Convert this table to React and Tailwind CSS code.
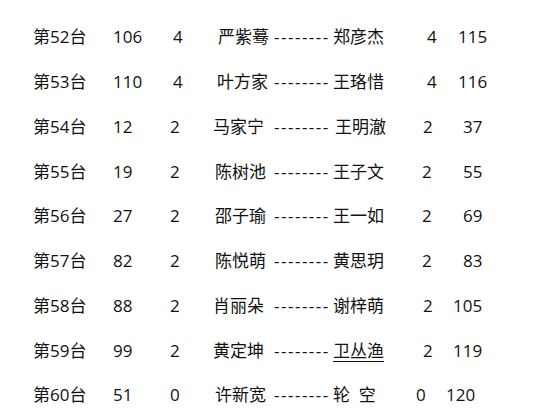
/**
 * chess pairing list, tables 52-60
 * plain word-doc style rows, fixed tab columns
 */

const rows = [
  { t: '第52台', a: '106', b: '4', p1: '严紫蓦', p2: '郑彦杰', c: '4', d: '115', bPad: 'pl-[3px]', p1Pad: 'pl-[5px]', cPad: 'pl-[11px]', dPad: 'pl-[12px]' },
  { t: '第53台', a: '110', b: '4', p1: '叶方家', p2: '王珞惜', c: '4', d: '116', bPad: 'pl-[3px]', p1Pad: 'pl-[4px]', cPad: 'pl-[11px]', dPad: 'pl-[12px]' },
  { t: '第54台', a: '12', b: '2', p1: '马家宁', p2: '王明澈', c: '2', d: '37', bPad: 'pl-0', p1Pad: 'pl-0', cPad: 'pl-[7px]', dPad: 'pl-[17px]', p2Pad: 'pl-[2px]' },
  { t: '第55台', a: '19', b: '2', p1: '陈树池', p2: '王子文', c: '2', d: '55', bPad: 'pl-0', p1Pad: 'pl-[2px]', cPad: 'pl-[6px]', dPad: 'pl-[17px]' },
  { t: '第56台', a: '27', b: '2', p1: '邵子瑜', p2: '王一如', c: '2', d: '69', bPad: 'pl-0', p1Pad: 'pl-[2px]', cPad: 'pl-[6px]', dPad: 'pl-[17px]' },
  { t: '第57台', a: '82', b: '2', p1: '陈悦萌', p2: '黄思玥', c: '2', d: '83', bPad: 'pl-0', p1Pad: 'pl-[2px]', cPad: 'pl-[6px]', dPad: 'pl-[17px]' },
  { t: '第58台', a: '88', b: '2', p1: '肖丽朵', p2: '谢梓萌', c: '2', d: '105', bPad: 'pl-0', p1Pad: 'pl-0', cPad: 'pl-[7px]', dPad: 'pl-[7px]' },
  { t: '第59台', a: '99', b: '2', p1: '黄定坤', p2: '卫丛渔', c: '2', d: '119', bPad: 'pl-0', p1Pad: 'pl-0', cPad: 'pl-[7px]', dPad: 'pl-[7px]', under: true },
  { t: '第60台', a: '51', b: '0', p1: '许新宽', p2: '轮  空', c: '0', d: '120', bPad: 'pl-0', p1Pad: 'pl-[2px]', cPad: 'pl-0', dPad: 'pl-0' },
];

export default function App() {
  return (
    <div
      className="w-[537px] h-[419px] overflow-hidden bg-white pt-[14.6px] text-[17px] text-[#111]"
      style={{ fontFamily: '"Open Sans", "Noto Sans CJK SC", sans-serif' }}
    >
      {rows.map((r) => (
        <div key={r.t} className="flex h-[44.75px] items-center whitespace-pre pl-[33px] leading-none">
          <span className="w-[80px] shrink-0">{r.t}</span>
          <span className="w-[57px] shrink-0">{r.a}</span>
          <span className={`w-[43px] shrink-0 ${r.bPad}`}>{r.b}</span>
          <span className={`w-[61px] shrink-0 ${r.p1Pad}`}>{r.p1}</span>
          <span className="w-[59px] shrink-0 tracking-[1.5px]">--------</span>
          <span className={`w-[83px] shrink-0 ${r.p2Pad || ''}`}>
            <span className={r.under ? 'underline underline-offset-[4px]' : ''}>{r.p2}</span>
          </span>
          <span className={`w-[30px] shrink-0 ${r.cPad}`}>{r.c}</span>
          <span className={r.dPad}>{r.d}</span>
        </div>
      ))}
    </div>
  );
}
